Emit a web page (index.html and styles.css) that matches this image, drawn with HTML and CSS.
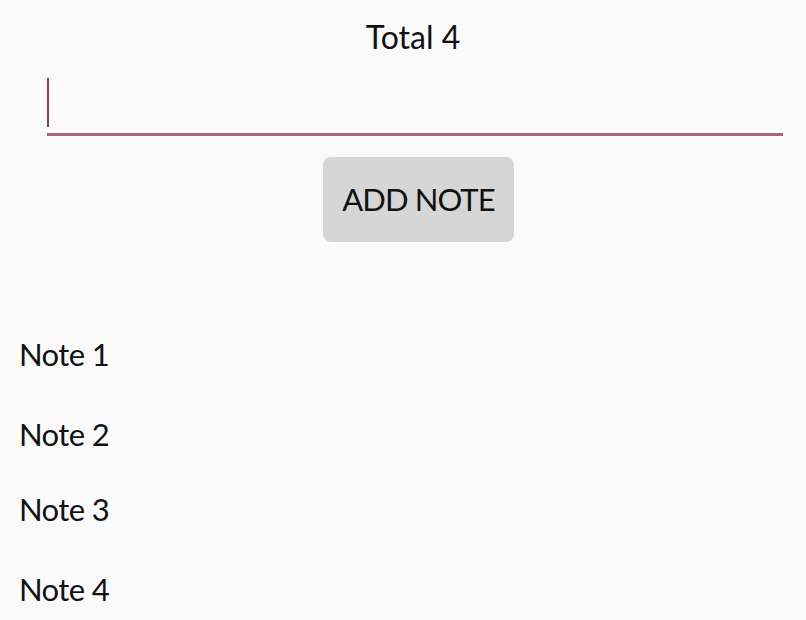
FILE: index.html
```html
<!DOCTYPE html>
<html>
<head>
<meta charset="utf-8">
<link rel="stylesheet" href="styles.css">
</head>
<body>
<div class="app">
  <div class="total">Total 4</div>
  <div class="field">
    <div class="input"><span class="caret"></span></div>
  </div>
  <div class="actions">
    <button class="btn">ADD NOTE</button>
  </div>
  <ul class="notes">
    <li class="note n1">Note 1</li>
    <li class="note n2">Note 2</li>
    <li class="note n3">Note 3</li>
    <li class="note n4">Note 4</li>
  </ul>
</div>
</body>
</html>
```
FILE: styles.css
```css
html, body {
  margin: 0;
  padding: 0;
  background: #fafafa;
}
body {
  width: 806px;
  height: 620px;
  overflow: hidden;
  font-family: Lato, "Noto Sans", sans-serif;
  color: #111;
}
.app {
  display: flex;
  flex-direction: column;
}
.total {
  text-align: center;
  font-size: 32px;
  line-height: 40px;
  padding-top: 17px;
  padding-left: 20px;
}
.field {
  padding: 19px 23px 0 47px;
}
.input {
  height: 57px;
  border-bottom: 3px solid #a8647e;
  display: flex;
  align-items: flex-start;
}
.caret {
  display: block;
  width: 2px;
  height: 49px;
  margin-top: 2px;
  background: #6a4a58;
}
.actions {
  display: flex;
  justify-content: center;
  padding-top: 21px;
  padding-left: 31px;
}
.btn {
  width: 191px;
  height: 85px;
  border: none;
  border-radius: 8px;
  background: #d6d6d6;
  font-family: Lato, "Noto Sans", sans-serif;
  font-size: 31px;
  letter-spacing: -0.9px;
  color: #111;
  padding: 0 0 2px 0;
}
.notes {
  list-style: none;
  margin: 0;
  padding: 0 0 0 19px;
}
.note {
  font-size: 31px;
  letter-spacing: -0.6px;
  line-height: 40px;
}
.n1 { margin-top: 92px; }
.n2 { margin-top: 40px; }
.n3 { margin-top: 35px; }
.n4 { margin-top: 40px; }
```
